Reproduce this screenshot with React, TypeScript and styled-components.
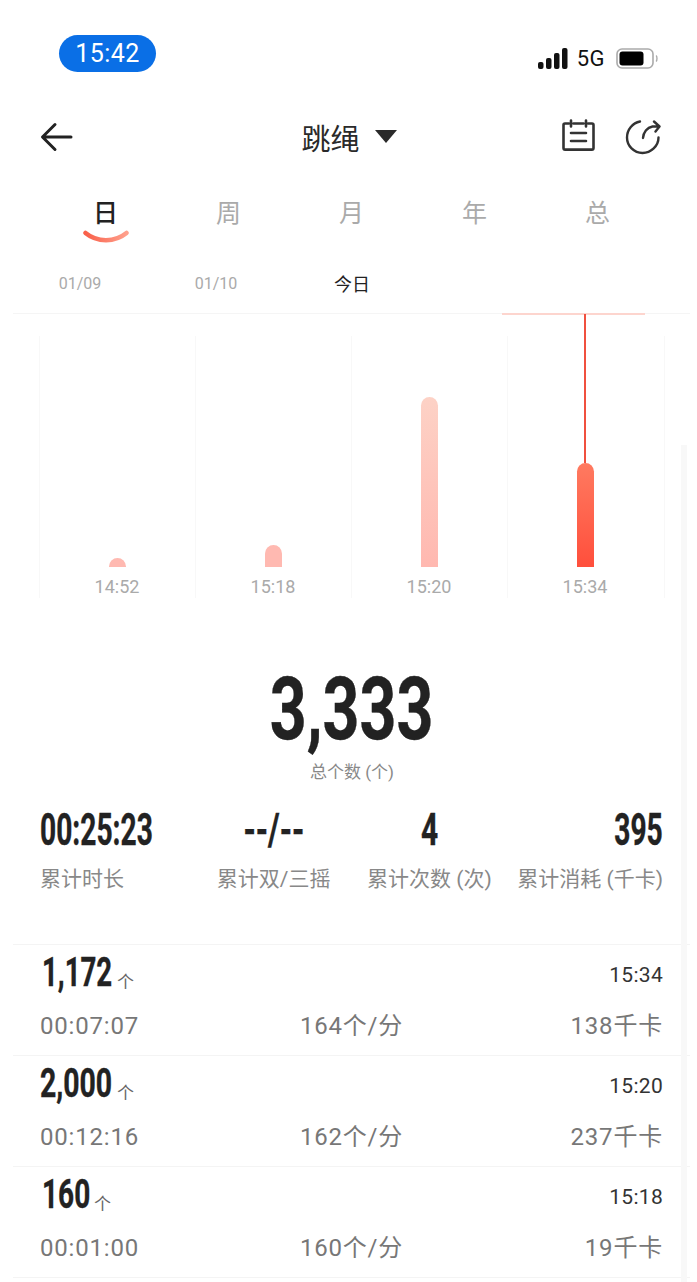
import React from "react";
import styled, { createGlobalStyle } from "styled-components";

const Global = createGlobalStyle`
  html, body { margin: 0; padding: 0; background: #fff; }
  body { font-family: Roboto, "Noto Sans CJK SC", sans-serif; color: #222; }
`;

const Page = styled.div`
  position: relative;
  width: 697px;
  height: 1282px;
  overflow: hidden;
  background: #fff;
`;

const ScrollTrack = styled.div`
  position: absolute;
  left: 681px;
  top: 445px;
  width: 6px;
  bottom: 0;
  background: #f8f8f8;
`;

const StatusBar = styled.div`
  height: 100px;
  box-sizing: border-box;
  padding: 35px 39px 0 59px;
  display: flex;
  justify-content: space-between;
  align-items: flex-start;
`;

const TimePill = styled.div`
  width: 97px;
  height: 37px;
  border-radius: 19px;
  background: #0a6fe6;
  color: #fff;
  font-size: 25px;
  line-height: 37px;
  text-align: center;
  letter-spacing: 0.4px;
`;

const StatusIcons = styled.div`
  display: flex;
  align-items: center;
  margin-top: 12px;
  height: 22px;
`;

const NetworkLabel = styled.span`
  font-size: 22px;
  color: #111;
  margin: 0 11px 0 9px;
  letter-spacing: 0.5px;
`;

const Header = styled.div`
  height: 75px;
  box-sizing: border-box;
  padding: 0 36px 0 40px;
  display: grid;
  grid-template-columns: 1fr auto 1fr;
  align-items: center;
  margin-top: -1px;
`;

const Title = styled.div`
  display: flex;
  align-items: center;
  gap: 15px;
  font-size: 29px;
  color: #2a2a2a;
  margin-right: 3px;
`;

const HeaderActions = styled.div`
  display: flex;
  justify-content: flex-end;
  gap: 30px;
`;

const Tabs = styled.div`
  height: 91px;
  box-sizing: border-box;
  margin-left: 44px;
  padding-top: 24px;
  display: grid;
  grid-template-columns: repeat(5, 123px);
`;

const Tab = styled.div<{ $active?: boolean }>`
  display: flex;
  flex-direction: column;
  align-items: center;
  font-size: 25px;
  line-height: 32px;
  font-weight: ${(p) => (p.$active ? 500 : 400)};
  color: ${(p) => (p.$active ? "#222" : "#aaa")};
`;

const DateRow = styled.div`
  height: 48px;
  margin-left: 12px;
  display: grid;
  grid-template-columns: repeat(3, 136px);
  align-items: center;
`;

const DateItem = styled.div<{ $active?: boolean }>`
  text-align: center;
  font-size: ${(p) => (p.$active ? 18 : 16)}px;
  color: ${(p) => (p.$active ? "#222" : "#aaa")};
  margin-top: -12px;
`;

const ChartFrame = styled.div`
  position: relative;
  height: 287px;
  box-sizing: border-box;
  margin: 0 7px 0 13px;
  border-top: 1px solid #f5f5f5;
  padding: 22px 0 0 26px;
`;

const Highlight = styled.div`
  position: absolute;
  left: 489px;
  top: -1px;
  width: 143px;
  height: 2px;
  background: #fdd5ce;
`;

const Plot = styled.div`
  display: grid;
  grid-template-columns: repeat(4, 156px);
  width: 625px;
  height: 262px;
  border-right: 1px solid #f8f8f8;
`;

const PlotColumn = styled.div`
  position: relative;
  display: flex;
  flex-direction: column;
  align-items: center;
  justify-content: flex-end;
  padding-right: 1px;
  border-left: 1px solid #f8f8f8;
`;

const Bar = styled.div<{ $h: number; $active?: boolean }>`
  position: relative;
  width: 17px;
  height: ${(p) => p.$h}px;
  border-radius: 8.5px 8.5px 0 0;
  background: ${(p) =>
    p.$active
      ? "linear-gradient(#ff7a60, #ff4f3c)"
      : p.$h > 50
        ? "linear-gradient(#fdd2c6, #ffb8b0)"
        : "#ffb9b1"};
  ${(p) =>
    p.$active &&
    `&::before {
      content: "";
      position: absolute;
      left: 7.5px;
      bottom: 100%;
      width: 2px;
      height: 149px;
      background: #f0503f;
    }`}
`;

const AxisLabel = styled.div`
  height: 31px;
  padding-top: 8px;
  box-sizing: border-box;
  font-size: 18px;
  line-height: 23px;
  color: #aaa;
`;

const Summary = styled.div`
  display: flex;
  flex-direction: column;
  align-items: center;
  padding: 65px 0 0 7px;
`;

const BigValue = styled.div`
  display: flex;
  justify-content: center;
  width: 162px;
  height: 88px;
  align-items: center;
`;

const Condensed = styled.span<{ $size: number; $sx: number; $origin?: string }>`
  flex-shrink: 0;
  display: inline-block;
  white-space: nowrap;
  font-family: Roboto, sans-serif;
  font-weight: 700;
  font-size: ${(p) => p.$size}px;
  color: #222;
  -webkit-text-stroke: 0.4px #222;
  transform: scaleX(${(p) => p.$sx});
  transform-origin: ${(p) => p.$origin || "center"} center;
`;

const SummaryLabel = styled.div`
  margin-top: 8px;
  font-size: 17px;
  line-height: 22px;
  color: #888;
`;

const Stats = styled.div`
  margin: 23px 0 0 40px;
  display: grid;
  grid-template-columns: repeat(4, 155.75px);
`;

const Stat = styled.div<{ $align: string }>`
  display: flex;
  flex-direction: column;
  align-items: ${(p) => p.$align};
`;

const StatValue = styled.div<{ $align: string }>`
  display: flex;
  justify-content: ${(p) => p.$align};
  height: 48px;
  align-items: center;
  width: 100%;
`;

const StatLabel = styled.div`
  margin-top: 10px;
  font-size: 21px;
  line-height: 30px;
  color: #888;
  white-space: nowrap;
`;

const List = styled.div`
  margin: 50px 7px 0 13px;
`;

const Row = styled.div`
  height: 111px;
  box-sizing: border-box;
  border-top: 1px solid #f4f4f4;
  padding: 0 27px;
`;

const RowTop = styled.div`
  height: 57px;
  display: flex;
  justify-content: space-between;
  align-items: center;
`;

const RowCount = styled.div<{ $w: number; $lead: number }>`
  display: flex;
  align-items: center;
  width: ${(p) => p.$w}px;
  height: 48px;
  margin: -2px 0 0 ${(p) => p.$lead}px;
`;

const CountLine = styled.div`
  display: flex;
  align-items: center;
`;

const Unit = styled.span`
  font-size: 17px;
  color: #666;
  margin: 14px 0 0 5px;
`;

const RowTime = styled.span`
  font-size: 21px;
  color: #333;
  margin-top: 2px;
  letter-spacing: 0.3px;
`;

const RowBottom = styled.div`
  display: grid;
  grid-template-columns: repeat(3, 1fr);
  margin-top: 6px;
  font-size: 24px;
  line-height: 36px;
  color: #777;
  letter-spacing: 0.8px;
`;

const Cell = styled.span<{ $align: string }>`
  text-align: ${(p) => p.$align};
`;

const ArrowIcon = () => (
  <svg width="34" height="30" viewBox="0 0 34 30" fill="none" stroke="#222" strokeWidth="3" strokeLinecap="round" strokeLinejoin="round">
    <path d="M31 15H3M15 2.5 2.5 15 15 27.5" />
  </svg>
);

const CalendarIcon = () => (
  <svg width="33" height="33" viewBox="0 0 33 33" fill="none" stroke="#333" strokeWidth="2.6" strokeLinecap="round" strokeLinejoin="round">
    <path d="M7 4.5H3c-1 0-1.500.6-1.500 1.500v23c0 1 .6 1.600 1.600 1.600h26.800c1 0 1.600-.6 1.600-1.600V6c0-1-.5-1.500-1.500-1.500h-4" />
    <path d="M11.500 4.500h10M9 1.500v6M24 1.500v6M9 14h15M9 22h15" />
  </svg>
);

const ShareIcon = () => (
  <svg width="36" height="36" viewBox="0 0 36 36" fill="none" stroke="#333" strokeWidth="2.4" strokeLinecap="round" strokeLinejoin="round">
    <path d="M15 2.500C7.800 3.800 2 10.500 2 18.500 2 27 9 34 17.500 34S33.500 27 33.500 18.500" />
    <path d="M18 19c.4-5.500 4-10.500 9.500-11.500H34M29 2.500l5.500 5-4 5" />
  </svg>
);

const TABS = ["日", "周", "月", "年", "总"];

const BARS = [
  { label: "14:52", h: 9 },
  { label: "15:18", h: 22 },
  { label: "15:20", h: 170 },
  { label: "15:34", h: 104, active: true },
];

const STATS = [
  { value: "00:25:23", label: "累计时长", sx: 0.64, align: "flex-start", origin: "left" },
  { value: "--/--", label: "累计双/三摇", sx: 0.71, align: "center", origin: "center" },
  { value: "4", label: "累计次数 (次)", sx: 0.68, align: "center", origin: "center" },
  { value: "395", label: "累计消耗 (千卡)", sx: 0.64, align: "flex-end", origin: "right" },
];

const ROWS = [
  { count: "1,172", w: 70, lead: 2, sx: 0.69, time: "15:34", dur: "00:07:07", rate: "164个/分", cal: "138千卡" },
  { count: "2,000", w: 72, lead: 0, sx: 0.71, time: "15:20", dur: "00:12:16", rate: "162个/分", cal: "237千卡" },
  { count: "160", w: 47, lead: 2, sx: 0.7, time: "15:18", dur: "00:01:00", rate: "160个/分", cal: "19千卡" },
];

export default function App() {
  return (
    <Page>
      <Global />
      <ScrollTrack />
      <StatusBar>
        <TimePill>15:42</TimePill>
        <StatusIcons>
          <svg width="30" height="21" viewBox="0 0 30 21" fill="#111">
            <rect x="0" y="14" width="5.500" height="7" rx="2" />
            <rect x="8" y="10" width="5.500" height="11" rx="2" />
            <rect x="16" y="5" width="5.500" height="16" rx="2" />
            <rect x="24" y="0" width="5.500" height="21" rx="2" />
          </svg>
          <NetworkLabel>5G</NetworkLabel>
          <svg width="42" height="21" viewBox="0 0 42 21" fill="none">
            <rect x="1" y="1" width="36" height="19" rx="5" stroke="#aaa" strokeWidth="1.6" />
            <rect x="3.500" y="3.500" width="24" height="14" rx="3" fill="#000" />
            <path d="M40 7.500c1.300.8 1.300 5.200 0 6" stroke="#aaa" strokeWidth="1.400" />
          </svg>
        </StatusIcons>
      </StatusBar>

      <Header>
        <ArrowIcon />
        <Title>
          跳绳
          <svg width="22" height="13" viewBox="0 0 22 13" fill="#2a2a2a">
            <path d="M0 0h22L11 13z" />
          </svg>
        </Title>
        <HeaderActions>
          <CalendarIcon />
          <ShareIcon />
        </HeaderActions>
      </Header>

      <Tabs>
        {TABS.map((t, i) => (
          <Tab key={t} $active={i === 0}>
            {t}
            {i === 0 && (
              <svg width="46" height="14" viewBox="0 0 46 14" fill="none">
                <defs>
                  <linearGradient id="arc" x1="0" x2="1" y1="0" y2="0">
                    <stop offset="0" stopColor="#f9604a" />
                    <stop offset="1" stopColor="#ffa08c" />
                  </linearGradient>
                </defs>
                <path d="M2.500 3C14 12.500 32 12.500 43.500 3" stroke="url(#arc)" strokeWidth="4.500" strokeLinecap="round" />
              </svg>
            )}
          </Tab>
        ))}
      </Tabs>

      <DateRow>
        <DateItem>01/09</DateItem>
        <DateItem>01/10</DateItem>
        <DateItem $active>今日</DateItem>
      </DateRow>

      <ChartFrame>
        <Highlight />
        <Plot>
          {BARS.map((b) => (
            <PlotColumn key={b.label}>
              <Bar $h={b.h} $active={b.active} />
              <AxisLabel>{b.label}</AxisLabel>
            </PlotColumn>
          ))}
        </Plot>
      </ChartFrame>

      <Summary>
        <BigValue>
          <Condensed $size={87} $sx={0.74}>3,333</Condensed>
        </BigValue>
        <SummaryLabel>总个数 (个)</SummaryLabel>
      </Summary>

      <Stats>
        {STATS.map((s) => (
          <Stat key={s.label} $align={s.align}>
            <StatValue $align={s.align}>
              <Condensed $size={44} $sx={s.sx} $origin={s.origin}>{s.value}</Condensed>
            </StatValue>
            <StatLabel>{s.label}</StatLabel>
          </Stat>
        ))}
      </Stats>

      <List>
        {ROWS.map((r) => (
          <Row key={r.time}>
            <RowTop>
              <CountLine>
                <RowCount $w={r.w} $lead={r.lead}>
                  <Condensed $size={40} $sx={r.sx} $origin="left">{r.count}</Condensed>
                </RowCount>
                <Unit>个</Unit>
              </CountLine>
              <RowTime>{r.time}</RowTime>
            </RowTop>
            <RowBottom>
              <Cell $align="left">{r.dur}</Cell>
              <Cell $align="center">{r.rate}</Cell>
              <Cell $align="right">{r.cal}</Cell>
            </RowBottom>
          </Row>
        ))}
        <Row />
      </List>
    </Page>
  );
}
